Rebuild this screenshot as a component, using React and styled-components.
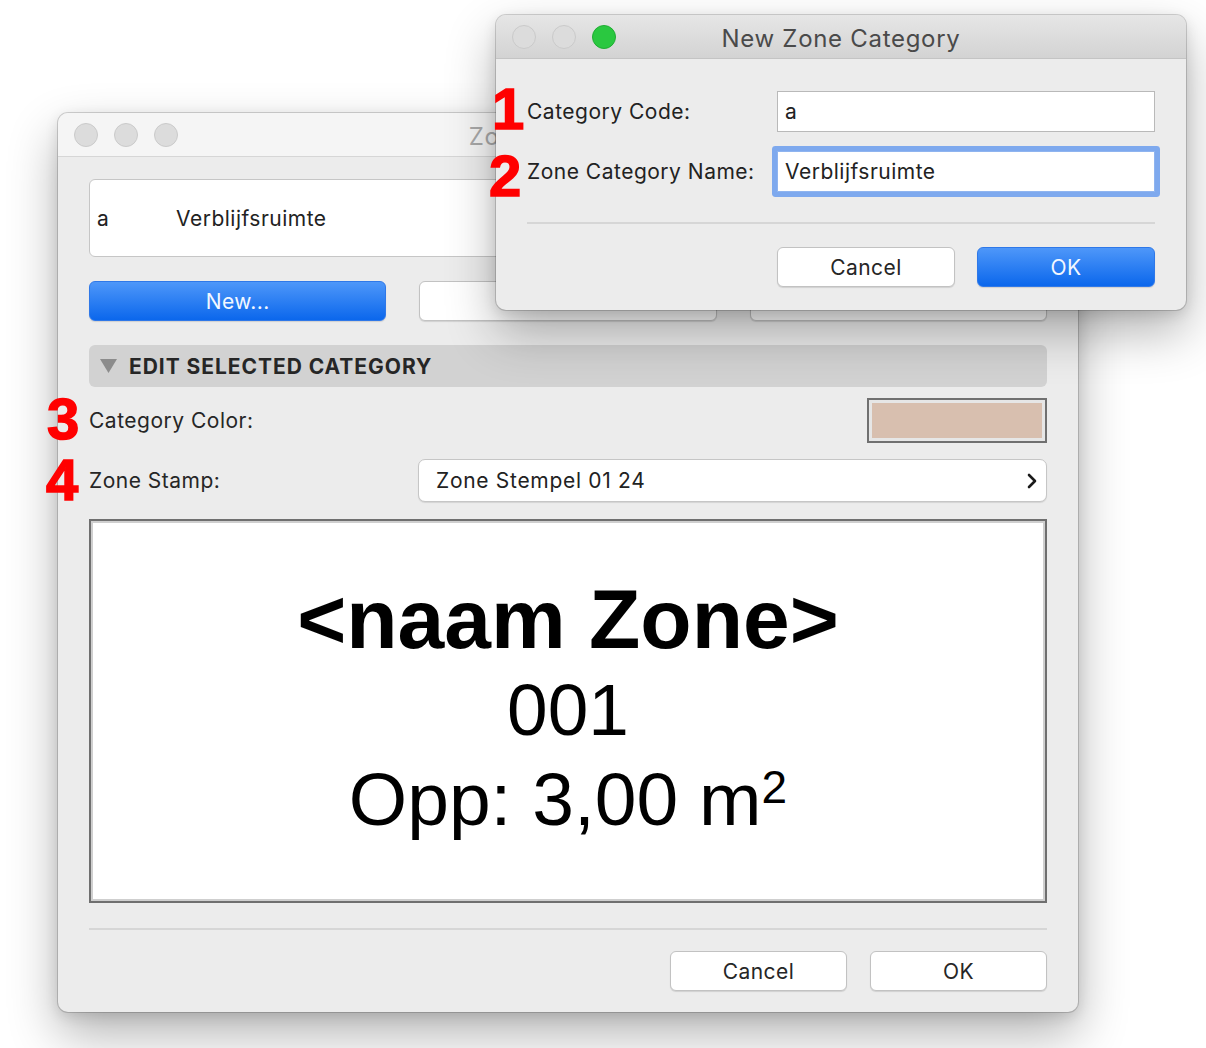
import styled, { createGlobalStyle, css } from 'styled-components';

const GlobalStyle = createGlobalStyle`
  html, body {
    margin: 0;
    padding: 0;
    background: #ffffff;
  }
  body {
    font-family: Inter, "Noto Sans", "Liberation Sans", sans-serif;
    color: #1f1f1f;
  }
`;

const Desktop = styled.div`
  position: relative;
  width: 1206px;
  height: 1048px;
  overflow: hidden;
  background: #ffffff;
`;

const Window = styled.div`
  position: absolute;
  left: ${p => p.x}px;
  top: ${p => p.y}px;
  width: ${p => p.w}px;
  height: ${p => p.h}px;
  display: flex;
  flex-direction: column;
  background: #ececec;
  border-radius: 10px;
  overflow: hidden;
  box-shadow: 0 0 0 1px rgba(0, 0, 0, 0.16), 0 22px 50px rgba(0, 0, 0, 0.3), 0 4px 14px rgba(0, 0, 0, 0.12);
`;

const TitleBar = styled.div`
  position: relative;
  flex: 0 0 44px;
  display: flex;
  align-items: center;
  justify-content: center;
  border-bottom: 1px solid ${p => (p.active ? '#c4c4c4' : '#d6d6d6')};
  background: ${p => (p.active ? 'linear-gradient(#e6e6e6, #d3d3d3)' : '#f5f5f5')};
  box-sizing: border-box;
`;

const Lights = styled.div`
  position: absolute;
  left: 16px;
  top: 10px;
  display: flex;
  gap: 16px;
`;

const Light = styled.span`
  width: 24px;
  height: 24px;
  border-radius: 50%;
  box-sizing: border-box;
  background: ${p => (p.green ? '#2ac840' : '#dcdcdc')};
  border: 1px solid ${p => (p.green ? '#20ad33' : '#cacaca')};
`;

const Title = styled.div`
  font-size: 24px;
  color: ${p => (p.active ? '#4a4a4a' : '#a9a9a9')};
  letter-spacing: 0.7px;
  margin-top: 3px;
`;

const Body = styled.div`
  flex: 1;
  display: flex;
  flex-direction: column;
  padding: ${p => p.pad};
`;

const CategoryList = styled.div`
  height: 78px;
  box-sizing: border-box;
  background: #ffffff;
  border: 1px solid #c6c6c6;
  border-radius: 6px;
  display: flex;
  align-items: center;
  padding: 0 7px;
  font-size: 21px;
  letter-spacing: 0.5px;
  color: #222;
`;

const CodeCell = styled.span`
  width: 79px;
`;

const ButtonRow = styled.div`
  display: grid;
  grid-template-columns: repeat(3, 1fr);
  gap: 33px;
  margin-top: 24px;
`;

const Button = styled.button`
  height: 40px;
  width: ${p => p.width || 'auto'};
  box-sizing: border-box;
  border-radius: 6px;
  font-family: inherit;
  font-size: 21px;
  letter-spacing: 0.4px;
  color: #262626;
  background: #ffffff;
  border: 1px solid #c2c2c2;
  box-shadow: 0 1px 1px rgba(0, 0, 0, 0.12);
  padding: 0;
  ${p =>
    p.primary &&
    css`
      background: linear-gradient(#4e97f9, #0b67ec);
      border: 1px solid #2f78e8;
      color: #f2f7ff;
    `}
`;

const SectionHeader = styled.div`
  margin-top: 24px;
  height: 42px;
  border-radius: 6px;
  background: #d2d2d2;
  display: flex;
  align-items: center;
  gap: 12px;
  padding-left: 11px;
  font-size: 21px;
  font-weight: 700;
  letter-spacing: 0.95px;
  color: #262626;
`;

const FieldRow = styled.div`
  display: flex;
  align-items: center;
  justify-content: space-between;
  margin-top: ${p => p.gap}px;
  font-size: 21px;
  letter-spacing: 0.5px;
  color: #262626;
`;

const Swatch = styled.div`
  width: 180px;
  height: 45px;
  box-sizing: border-box;
  border: 2px solid #707070;
  padding: 3px;
  background: #e6e6e6;
  &::after {
    content: '';
    display: block;
    height: 100%;
    background: ${p => p.color};
  }
`;

const Popup = styled.div`
  width: 629px;
  height: 43px;
  box-sizing: border-box;
  background: #ffffff;
  border: 1px solid #c6c6c6;
  border-radius: 7px;
  box-shadow: 0 1px 1px rgba(0, 0, 0, 0.1);
  display: flex;
  align-items: center;
  justify-content: space-between;
  padding: 0 8px 0 17px;
  font-size: 21px;
  letter-spacing: 0.7px;
  color: #222;
`;

const Preview = styled.div`
  margin-top: 17px;
  height: 384px;
  box-sizing: border-box;
  background: #ffffff;
  border: 2px solid #6f6f6f;
  box-shadow: inset 0 0 0 2px #cfcfcf;
  display: flex;
  flex-direction: column;
  align-items: center;
  padding-top: 52px;
  font-family: "Liberation Sans", Arial, sans-serif;
  color: #000;
`;

const StampLine = styled.div`
  font-size: ${p => p.size}px;
  font-weight: ${p => (p.bold ? 700 : 400)};
  line-height: ${p => p.lh}px;
  sup {
    font-size: 46px;
    vertical-align: 22px;
    line-height: 0;
  }
`;

const Separator = styled.div`
  height: 2px;
  background: #d6d6d6;
  margin-top: ${p => p.gap}px;
`;

const Footer = styled.div`
  display: flex;
  justify-content: flex-end;
  gap: ${p => p.gap}px;
  margin-top: ${p => p.top}px;
`;

const FormRow = styled.div`
  display: flex;
  align-items: center;
  margin-top: ${p => p.gap}px;
  font-size: 21px;
  letter-spacing: 0.5px;
  color: #222;
`;

const FormLabel = styled.span`
  width: 250px;
`;

const TextInput = styled.div`
  width: 378px;
  height: 41px;
  box-sizing: border-box;
  background: #ffffff;
  border: 1px solid #b9b9b9;
  display: flex;
  align-items: center;
  padding-left: 7px;
  font-size: 21px;
  color: #222;
  ${p =>
    p.focused &&
    css`
      border-color: #8fb4ef;
      box-shadow: 0 0 0 5px #7ea9ee;
      border-radius: 1px;
    `}
`;

const Marker = styled.div`
  position: absolute;
  left: ${p => p.x}px;
  top: ${p => p.y}px;
  font-family: "Liberation Sans", Arial, sans-serif;
  font-weight: 700;
  font-size: 58px;
  line-height: 1;
  color: #ff0000;
  -webkit-text-stroke: 1.5px #ff0000;
  z-index: 5;
`;

const Triangle = () => (
  <svg width="17" height="14" viewBox="0 0 17 14">
    <path d="M0 0 H17 L8.5 14 Z" fill="#8c8c8c" />
  </svg>
);

const Chevron = () => (
  <svg width="12" height="16" viewBox="0 0 12 16">
    <path d="M3 2 L9 8 L3 14" fill="none" stroke="#1a1a1a" strokeWidth="2.6" strokeLinecap="round" strokeLinejoin="round" />
  </svg>
);

export default function App() {
  return (
    <Desktop>
      <GlobalStyle />

      <Window x={58} y={113} w={1020} h={899}>
        <TitleBar>
          <Lights>
            <Light />
            <Light />
            <Light />
          </Lights>
          <Title>Zone Categories</Title>
        </TitleBar>
        <Body pad="22px 31px 0 31px">
          <CategoryList>
            <CodeCell>a</CodeCell>
            <span>Verblijfsruimte</span>
          </CategoryList>
          <ButtonRow>
            <Button primary>New...</Button>
            <Button>Rename</Button>
            <Button>Delete</Button>
          </ButtonRow>
          <SectionHeader>
            <Triangle />
            EDIT SELECTED CATEGORY
          </SectionHeader>
          <FieldRow gap={11}>
            <span>Category Color:</span>
            <Swatch color="#d8bfaf" />
          </FieldRow>
          <FieldRow gap={16}>
            <span>Zone Stamp:</span>
            <Popup>
              <span>Zone Stempel 01 24</span>
              <Chevron />
            </Popup>
          </FieldRow>
          <Preview>
            <StampLine bold size={84} lh={92}>&lt;naam Zone&gt;</StampLine>
            <StampLine size={73} lh={90}>001</StampLine>
            <StampLine size={75} lh={88}>
              Opp: 3,00 m<sup>2</sup>
            </StampLine>
          </Preview>
          <Separator gap={25} />
          <Footer gap={23} top={21}>
            <Button width="177px">Cancel</Button>
            <Button width="177px">OK</Button>
          </Footer>
        </Body>
      </Window>

      <Window x={496} y={15} w={690} h={295}>
        <TitleBar active>
          <Lights>
            <Light />
            <Light />
            <Light green />
          </Lights>
          <Title active>New Zone Category</Title>
        </TitleBar>
        <Body pad="0 31px 0 31px">
          <FormRow gap={32}>
            <FormLabel>Category Code:</FormLabel>
            <TextInput>a</TextInput>
          </FormRow>
          <FormRow gap={19}>
            <FormLabel>Zone Category Name:</FormLabel>
            <TextInput focused>Verblijfsruimte</TextInput>
          </FormRow>
          <Separator gap={30} />
          <Footer gap={22} top={23}>
            <Button width="178px">Cancel</Button>
            <Button width="178px" primary>OK</Button>
          </Footer>
        </Body>
      </Window>

      <Marker x={492} y={80}>1</Marker>
      <Marker x={489} y={147}>2</Marker>
      <Marker x={47} y={390}>3</Marker>
      <Marker x={46} y={451}>4</Marker>
    </Desktop>
  );
}
